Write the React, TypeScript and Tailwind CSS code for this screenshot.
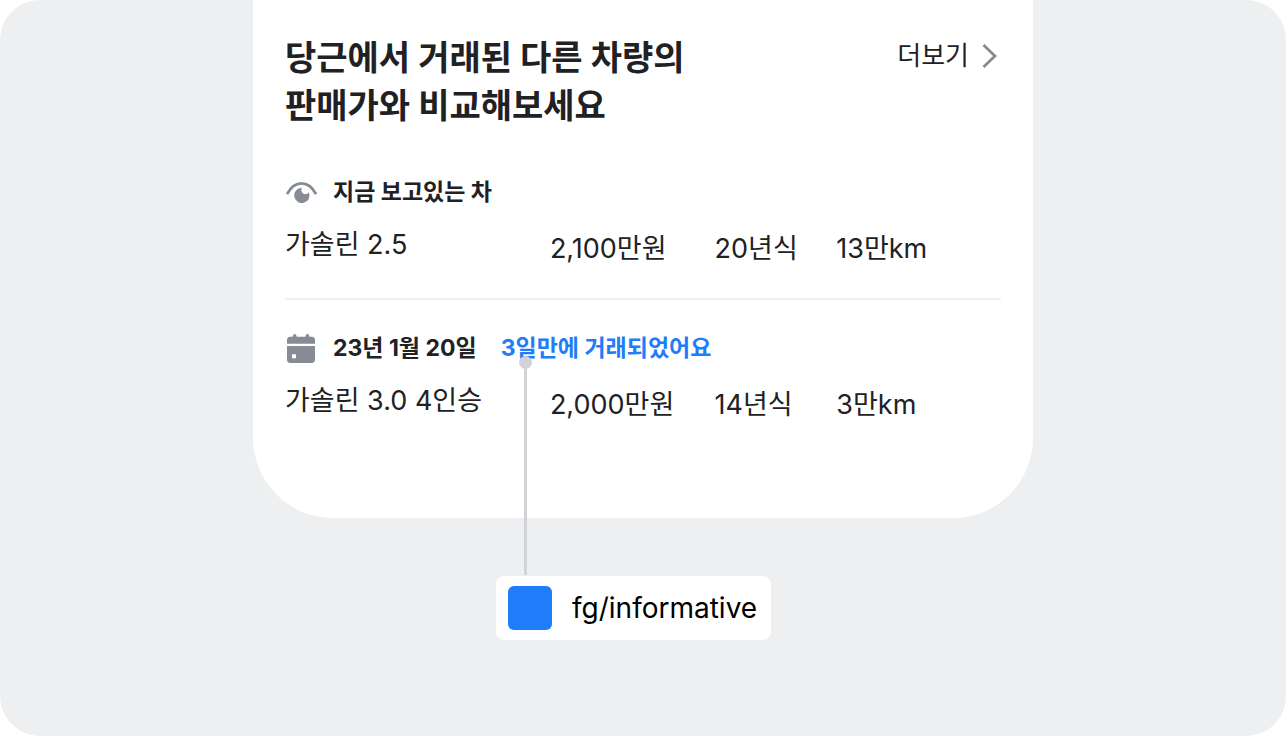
import type { ReactNode } from 'react';

type Sale = {
  id: string;
  icon: ReactNode;
  label: string;
  note?: string;
  model: string;
  price: string;
  year: string;
  mileage: string;
};

const EyeIcon = () => (
  <svg className="h-8 w-8 shrink-0" viewBox="0 0 32 32" fill="none" aria-hidden="true">
    <path d="M2 18.200C5.800 11 10.600 7.400 16.500 7.400S27.200 11 31 18.200" stroke="#868b94" strokeWidth="2.800" />
    <path d="M17 11.700a3.900 3.900 0 0 0 6.900 4.600A7.700 7.700 0 1 1 17 11.700z" fill="#868b94" />
  </svg>
);

const CalendarIcon = () => (
  <svg className="h-8 w-8 shrink-0" viewBox="0 0 32 32" fill="#868b94" aria-hidden="true">
    <path d="M2 11.700V8.200A3.400 3.400 0 0 1 5.400 4.800H7.200Q8 4.800 8 3.800a1.700 1.700 0 0 1 3.400 0Q11.400 4.800 12.200 4.800H20Q20.800 4.800 20.800 3.800a1.700 1.700 0 0 1 3.400 0Q24.200 4.800 25 4.800h1.600A3.400 3.400 0 0 1 30 8.200v3.500z" />
    <path fillRule="evenodd" d="M2 14h28v13.600a3.400 3.400 0 0 1-3.400 3.400H5.400A3.400 3.400 0 0 1 2 27.600zM7 22.300v4h4v-4z" />
  </svg>
);

// Marker that ties the blue text to the colour token below the card
const Connector = () => (
  <span className="absolute top-6 left-[18px] flex flex-col items-center" aria-hidden="true">
    <span className="h-[13px] w-[13px] rounded-full bg-[#d1d3d8]" />
    <span className="h-[206px] w-[3px] bg-[#d1d3d6]" />
  </span>
);

const sales: Sale[] = [
  {
    id: 'current',
    icon: <EyeIcon />,
    label: '지금 보고있는 차',
    model: '가솔린 2.5',
    price: '2,100만원',
    year: '20년식',
    mileage: '13만km',
  },
  {
    id: 'sold',
    icon: <CalendarIcon />,
    label: '23년 1월 20일',
    note: '3일만에 거래되었어요',
    model: '가솔린 3.0 4인승',
    price: '2,000만원',
    year: '14년식',
    mileage: '3만km',
  },
];

const SaleRows = ({ sale, last }: { sale: Sale; last: boolean }) => (
  <tbody className={last ? '' : 'border-b-2 border-[#eff0f2]'}>
    <tr>
      <th colSpan={4} scope="rowgroup" className={`p-0 text-left text-[23px] leading-8 font-bold ${last ? 'pt-8' : ''}`}>
        <div className="flex items-center gap-4">
          {sale.icon}
          <span>{sale.label}</span>
          {sale.note && (
            <span className="relative ml-2 text-[#217cf9]">
              {sale.note}
              <Connector />
            </span>
          )}
        </div>
      </th>
    </tr>
    <tr className="align-top">
      <td className="p-0 pt-[19px]">{sale.model}</td>
      <td className="p-0 pt-[23px] pb-[31px]">{sale.price}</td>
      <td className="p-0 pt-[23px] pb-[31px]">{sale.year}</td>
      <td className="p-0 pt-[23px] pb-[31px]">{sale.mileage}</td>
    </tr>
  </tbody>
);

const App = () => {
  return (
    <main className="flex min-h-screen flex-col items-center rounded-[40px] bg-[#edeff0] font-[Inter,'Noto_Sans_CJK_KR',sans-serif] text-[#212124]">
      <section className="w-full max-w-[780px] rounded-b-[80px] bg-white px-8 pt-[34px] pb-16">
        <header className="flex items-start justify-between">
          <h1 className="text-[34px] leading-[48px] font-bold">
            당근에서 거래된 다른 차량의
            <br />
            판매가와 비교해보세요
          </h1>
          <a href="#more" className="flex items-center gap-3 pt-0.5 text-[26px] leading-10">
            더보기
            <svg className="mr-1 h-6 w-4" viewBox="0 0 16 24" fill="none" stroke="#868b94" strokeWidth="2.800" aria-hidden="true">
              <path d="M2.500 1 14 12 2.500 23" />
            </svg>
          </a>
        </header>

        <table className="mt-[46px] w-full table-fixed border-collapse text-[27px] leading-9">
          <colgroup>
            <col className="w-[37%]" />
            <col className="w-[23%]" />
            <col className="w-[17%]" />
            <col />
          </colgroup>
          {sales.map((sale, i) => (
            <SaleRows key={sale.id} sale={sale} last={i === sales.length - 1} />
          ))}
        </table>
      </section>

      <div className="mt-[58px] w-full max-w-[780px]">
        <div className="ml-[243px] flex h-16 w-fit items-center gap-5 rounded-lg bg-white pr-3.5 pl-3 text-[28px] leading-10 text-black">
          <span className="h-11 w-11 rounded-md bg-[#217cf9]" />
          fg/informative
        </div>
      </div>
    </main>
  );
};

export default App;
